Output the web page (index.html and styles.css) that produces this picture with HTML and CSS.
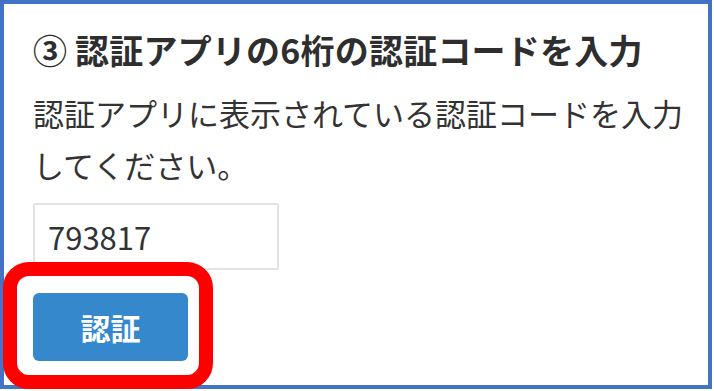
FILE: index.html
```html
<!DOCTYPE html>
<html lang="ja">
<head>
<meta charset="utf-8">
<link rel="stylesheet" href="styles.css">
</head>
<body>
<div class="frame">
  <h1 class="title">③ 認証アプリの6桁の認証コードを入力</h1>
  <p class="desc">認証アプリに表示されている認証コードを入力してください。</p>
  <input class="code" type="text" value="793817">
  <button class="verify" type="button">認証</button>
  <div class="highlight"></div>
</div>
</body>
</html>
```
FILE: styles.css
```css
html, body {
  margin: 0;
  padding: 0;
  background: #ffffff;
}
body {
  font-family: "Noto Sans CJK JP", "Noto Sans", sans-serif;
  color: #333333;
}
.frame {
  box-sizing: border-box;
  width: 712px;
  height: 389px;
  border: 4px solid #4472c4;
  padding: 23px 0 0 29px;
  position: relative;
  display: flex;
  flex-direction: column;
  align-items: flex-start;
}
.title {
  margin: 0;
  font-size: 34px;
  line-height: 46px;
  font-weight: bold;
  letter-spacing: 0.2px;
  color: #2e2e2e;
  white-space: nowrap;
}
.desc {
  margin: 14px 0 0;
  font-size: 31px;
  line-height: 52px;
  color: #333333;
}
.code {
  box-sizing: border-box;
  margin-top: 12px;
  width: 246px;
  height: 67px;
  border: 2px solid #e3e3e3;
  border-radius: 2px;
  padding: 0 0 0 13px;
  font-family: "Noto Sans CJK JP", sans-serif;
  font-size: 31px;
  color: #333333;
  background: #ffffff;
  outline: none;
}
.verify {
  box-sizing: border-box;
  margin-top: 23px;
  width: 155px;
  height: 68px;
  border: none;
  border-radius: 6px;
  background: #3588cc;
  color: #ffffff;
  font-family: "Noto Sans CJK JP", sans-serif;
  font-size: 30px;
  font-weight: bold;
  padding: 0;
}
.highlight {
  position: absolute;
  left: -1px;
  top: 258px;
  width: 210px;
  height: 127px;
  box-sizing: border-box;
  border: 14px solid #ff0000;
  border-radius: 26px;
}
```
